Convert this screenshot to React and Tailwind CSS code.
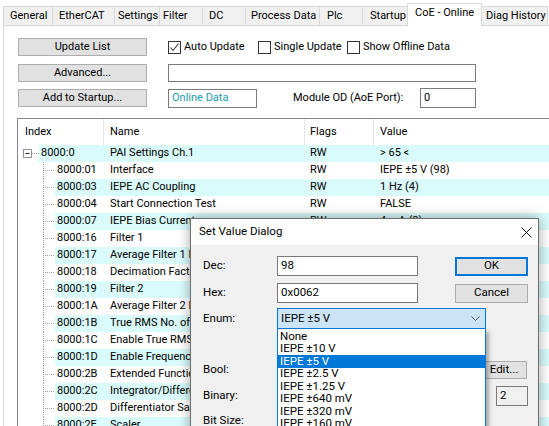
import React from "react";

const tabs = [
  { label: "General", cls: "w-[50px] pl-[6px]" },
  { label: "EtherCAT", cls: "w-[63px] pl-[6px]" },
  { label: "Settings", cls: "w-[46px] pl-[3px]" },
  { label: "Filter", cls: "w-[44px] pl-[3px]" },
  { label: "DC", cls: "w-[44px] pl-[6px]" },
  { label: "Process Data", cls: "w-[75px] pl-[5px]" },
  { label: "Plc", cls: "w-[44px] pl-[7px]" },
  { label: "Startup", cls: "w-[46px] pl-[7px]" },
  { label: "CoE - Online", cls: "w-[75px] pl-[7px]", active: true },
  { label: "Diag History", cls: "w-[67px] pl-[4px]" },
];

const rows = [
  { idx: "8000:0", name: "PAI Settings Ch.1", value: "> 65 <", root: true },
  { idx: "8000:01", name: "Interface", value: "IEPE ±5 V (98)" },
  { idx: "8000:03", name: "IEPE AC Coupling", value: "1 Hz (4)" },
  { idx: "8000:04", name: "Start Connection Test", value: "FALSE" },
  { idx: "8000:07", name: "IEPE Bias Current", value: "4 mA (2)" },
  { idx: "8000:16", name: "Filter 1", value: "FIR 50 Hz (0)" },
  { idx: "8000:17", name: "Average Filter 1 No of Samples", value: "4" },
  { idx: "8000:18", name: "Decimation Factor", value: "1" },
  { idx: "8000:19", name: "Filter 2", value: "FIR 50 Hz (0)" },
  { idx: "8000:1A", name: "Average Filter 2 No of Samples", value: "4" },
  { idx: "8000:1B", name: "True RMS No. of Samples", value: "0" },
  { idx: "8000:1C", name: "Enable True RMS", value: "FALSE" },
  { idx: "8000:1D", name: "Enable Frequency Measurement", value: "FALSE" },
  { idx: "8000:2B", name: "Extended Functions", value: "None (0)" },
  { idx: "8000:2C", name: "Integrator/Differentiator", value: "None (0)" },
  { idx: "8000:2D", name: "Differentiator Samples", value: "1" },
  { idx: "8000:2E", name: "Scaler", value: "Extended range (0)" },
];

const enumItems = [
  "None",
  "IEPE ±10 V",
  "IEPE ±5 V",
  "IEPE ±2.5 V",
  "IEPE ±1.25 V",
  "IEPE ±640 mV",
  "IEPE ±320 mV",
  "IEPE ±160 mV",
  "IEPE ±80 mV",
];

const Check = ({ checked }) => (
  <div className="w-[13px] h-[13px] border border-[#333333] bg-white flex items-center justify-center shrink-0">
    {checked && (
      <svg width="11" height="11" viewBox="0 0 11 11">
        <polyline points="1.5,5.5 4,8.5 9.5,1.5" fill="none" stroke="#333333" strokeWidth="1.1" />
      </svg>
    )}
  </div>
);

const Button = ({ children, className }) => (
  <div className={`flex items-center justify-center bg-[#e1e1e1] border border-[#adadad] shrink-0 ${className}`}>
    {children}
  </div>
);

const RootTree = () => (
  <svg width="21" height="17" className="shrink-0">
    <rect x="5.5" y="4.5" width="8" height="8" fill="white" stroke="#919191" />
    <line x1="7.5" y1="8.5" x2="11.5" y2="8.5" stroke="#222222" />
    <line x1="14" y1="8.5" x2="21" y2="8.5" stroke="#a0a0a0" strokeDasharray="1 1" />
  </svg>
);

const ChildTree = () => (
  <svg width="37" height="17" className="shrink-0">
    <line x1="25.5" y1="0" x2="25.5" y2="17" stroke="#a0a0a0" strokeDasharray="1 1" />
    <line x1="27" y1="8.5" x2="37" y2="8.5" stroke="#a0a0a0" strokeDasharray="1 1" />
  </svg>
);

const Label = ({ children }) => <div className="w-[86px] pl-[12px] shrink-0">{children}</div>;

const Field = ({ children, className }) => (
  <div className={`flex items-center pl-[3px] bg-white border border-[#7a7a7a] shrink-0 ${className}`}>
    {children}
  </div>
);

const App = () => {
  return (
    <div className="relative w-[549px] h-[426px] overflow-hidden bg-white text-black text-[11px] font-['Roboto',sans-serif] flex flex-col">
      {/* tabs */}
      <div className="flex items-end h-[25px] pl-[3px] shrink-0">
        {tabs.map((t, i) => (
          <div
            key={t.label}
            className={`${t.cls} ${i > 0 ? "-ml-px" : ""} ${
              t.active
                ? "relative z-10 h-[23px] -mb-px bg-white pb-[3px]"
                : "h-[19px] bg-[#f0f0f0]"
            } flex items-center border border-b-0 border-[#d9d9d9] whitespace-nowrap overflow-hidden shrink-0`}
          >
            {t.label}
          </div>
        ))}
      </div>

      {/* panel */}
      <div className="flex-1 flex flex-col ml-[3px] border-t border-l border-[#d9d9d9] min-h-0">
        <div className="flex pt-[12px] pl-[14px] gap-[21px] shrink-0">
          <div className="flex flex-col w-[129px]">
            <Button className="h-[18px]">Update List</Button>
            <Button className="h-[18px] mt-[8px]">Advanced...</Button>
            <Button className="h-[18px] mt-[7px]">Add to Startup...</Button>
          </div>
          <div className="flex flex-col">
            <div className="flex items-center h-[18px]">
              <div className="flex items-center gap-[3px] w-[90px]">
                <Check checked />
                <span>Auto Update</span>
              </div>
              <div className="flex items-center gap-[3px] w-[89px]">
                <Check />
                <span>Single Update</span>
              </div>
              <div className="flex items-center gap-[3px]">
                <Check />
                <span>Show Offline Data</span>
              </div>
            </div>
            <div className="mt-[8px] w-[308px] h-[18px] bg-white border border-[#7a7a7a]" />
            <div className="mt-[7px] flex items-start h-[19px]">
              <Field className="w-[89px] h-[19px] text-[#1a9aad]">Online Data</Field>
              <div className="w-[163px] pl-[36px] pt-[1px] whitespace-nowrap">Module OD (AoE Port):</div>
              <Field className="w-[56px] h-[20px] -mt-px">0</Field>
            </div>
          </div>
        </div>

        {/* list */}
        <div className="flex-1 mt-[10px] ml-[13px] border-t border-l border-[#828790] overflow-hidden">
          <div className="flex h-[26px] items-stretch">
            <div className="w-[86px] pl-[7px] flex items-center border-r border-[#e5e5e5] shrink-0">Index</div>
            <div className="w-[201px] pl-[6px] flex items-center border-r border-[#e5e5e5] shrink-0">Name</div>
            <div className="w-[69px] pl-[5px] flex items-center border-r border-[#e5e5e5] shrink-0">Flags</div>
            <div className="flex-1 pl-[6px] flex items-center">Value</div>
          </div>
          {rows.map((r, i) => (
            <div key={r.idx} className="flex h-[17px]">
              {r.root ? <RootTree /> : <ChildTree />}
              <div className={`flex flex-1 items-center whitespace-nowrap ${i % 2 === 0 ? "bg-[#d9fbfb]" : ""}`}>
                <div className={`${r.root ? "w-[64px]" : "w-[48px]"} pl-[2px] shrink-0`}>{r.idx}</div>
                <div className="w-[201px] pl-[7px] overflow-hidden shrink-0">{r.name}</div>
                <div className="w-[69px] pl-[6px] shrink-0">RW</div>
                <div className="flex-1 pl-[7px]">{r.value}</div>
              </div>
            </div>
          ))}
        </div>
      </div>

      {/* Set Value dialog */}
      <div className="absolute left-[190px] top-[218px] w-[349px] h-[240px] border border-[#6e6e6e] bg-[#f0f0f0] shadow-[0_0_12px_rgba(0,0,0,0.35)] text-[11.5px]">
        <div className="h-[26px] bg-white flex items-center justify-between pl-[8px] pr-[6px]">
          <span>Set Value Dialog</span>
          <svg width="11" height="11" viewBox="0 0 11 11">
            <path d="M0.5 0.5 L10.5 10.5 M10.5 0.5 L0.5 10.5" stroke="#111111" strokeWidth="1" />
          </svg>
        </div>
        <div className="flex flex-col pt-[11px]">
          <div className="flex items-center h-[20px]">
            <Label>Dec:</Label>
            <Field className="w-[141px] h-[20px]">98</Field>
            <div className="ml-[37px] w-[73px] h-[19px] flex items-center justify-center bg-[#e1e1e1] border-2 border-[#0078d7] shrink-0">
              OK
            </div>
          </div>
          <div className="flex items-center h-[20px] mt-[7px]">
            <Label>Hex:</Label>
            <Field className="w-[141px] h-[20px]">0x0062</Field>
            <Button className="ml-[37px] w-[73px] h-[19px]">Cancel</Button>
          </div>
          <div className="flex items-center h-[21px] mt-[5px]">
            <Label>Enum:</Label>
            <div className="w-[209px] h-[21px] flex items-center justify-between pl-[3px] pr-[5px] bg-[#cce4f7] border border-[#0078d7] shrink-0">
              <span>IEPE ±5 V</span>
              <svg width="9" height="5" viewBox="0 0 9 5">
                <polyline points="0.5,0.5 4.5,4.5 8.5,0.5" fill="none" stroke="#555555" strokeWidth="1" />
              </svg>
            </div>
          </div>
          <div className="flex items-center h-[18px] mt-[32px]">
            <Label>Bool:</Label>
            <div className="w-[204px] shrink-0" />
            <Button className="w-[46px] h-[18px]">Edit...</Button>
          </div>
          <div className="flex items-center h-[20px] mt-[7px]">
            <Label>Binary:</Label>
            <Field className="w-[200px] h-[20px]" />
            <div className="ml-[19px] w-[32px] h-[20px] pl-[3px] flex items-center border border-[#7a7a7a] bg-[#f0f0f0] shrink-0">
              2
            </div>
          </div>
          <div className="flex items-center h-[20px] mt-[5px]">
            <Label>Bit Size:</Label>
          </div>
        </div>

        {/* open enum list */}
        <div className="absolute left-[86px] top-[110px] w-[209px] h-[120px] bg-white border border-t-0 border-[#0078d7] pt-px shadow-[3px_3px_4px_rgba(0,0,0,0.3)]">
          {enumItems.map((e, i) => (
            <div
              key={e}
              className={`h-[12.5px] flex items-center pl-[2px] whitespace-nowrap ${
                i === 2 ? "bg-[#0078d7] text-white" : ""
              }`}
            >
              {e}
            </div>
          ))}
        </div>
      </div>
    </div>
  );
};

export default App;
